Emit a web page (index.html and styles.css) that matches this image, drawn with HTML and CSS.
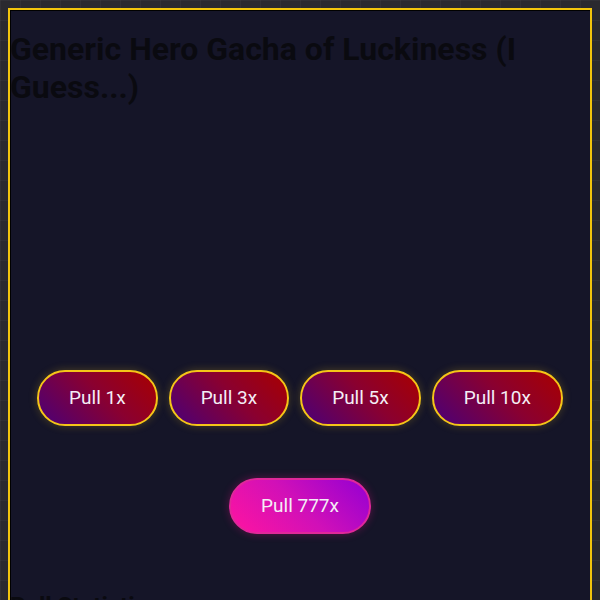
FILE: index.html
```html
<!DOCTYPE html>
<html lang="en">
<head>
    <meta charset="UTF-8">
    <meta name="viewport" content="width=device-width, initial-scale=1.0">
    <title>Generic Hero Gacha</title>
    <link rel="stylesheet" href="styles.css">
</head>
<body>

    <div class="container">
        <h1>Generic Hero Gacha of Luckiness (I Guess...)</h1>

        <!-- Result area -->
        <div class="results" id="results"></div>

        <div class="pull-buttons">
            <button class="pull-btn">Pull 1x</button>
            <button class="pull-btn">Pull 3x</button>
            <button class="pull-btn">Pull 5x</button>
            <button class="pull-btn">Pull 10x</button>
        </div>

        <div class="special-row">
            <button class="pull-btn special">Pull 777x</button>
        </div>

        <h2>Pull Statistics</h2>
        <div class="stats" id="stats"></div>
    </div>

</body>
</html>
```

FILE: styles.css
```css
/* Gacha page */
body {
    margin: 8px;
    font-family: 'Roboto', 'Liberation Sans', sans-serif;
    background-color: #2a292f;
    background-image:
        linear-gradient(rgba(255, 255, 255, 0.03) 1px, transparent 1px),
        linear-gradient(90deg, rgba(255, 255, 255, 0.03) 1px, transparent 1px);
    background-size: 20px 20px;
}

.container {
    border: 2px solid #f2c40c;
    background-color: #151528;
    box-shadow: inset 1px 1px 0 #000;
    min-height: 700px;
}

h1 {
    font-size: 32px;
    font-weight: bold;
    color: #0a0a10;
    margin: 20px 0 21px;
}

h2 {
    font-size: 24px;
    color: #0a0a10;
    margin: 20px 0;
}

.results {
    height: 243px;
}

.pull-buttons {
    display: flex;
    justify-content: center;
    gap: 11px;
}

.special-row {
    display: flex;
    justify-content: center;
    margin-top: 52px;
    margin-bottom: 58px;
}

.pull-btn {
    font-family: 'Roboto', 'Liberation Sans', sans-serif;
    font-size: 19px;
    line-height: 22px;
    color: #f4eef6;
    padding: 15px 30px;
    border: 2px solid #f5c518;
    border-radius: 28px;
    background: linear-gradient(45deg, #4a0078 0%, #8a0030 55%, #a80000 100%);
    box-shadow: 0 0 8px rgba(245, 197, 24, 0.25);
    cursor: pointer;
}

.pull-btn.special {
    border-color: #e0289a;
    background: linear-gradient(45deg, #ff14a0 0%, #d010b8 50%, #9400d3 100%);
    box-shadow: 0 0 8px rgba(255, 20, 147, 0.3);
}
```
